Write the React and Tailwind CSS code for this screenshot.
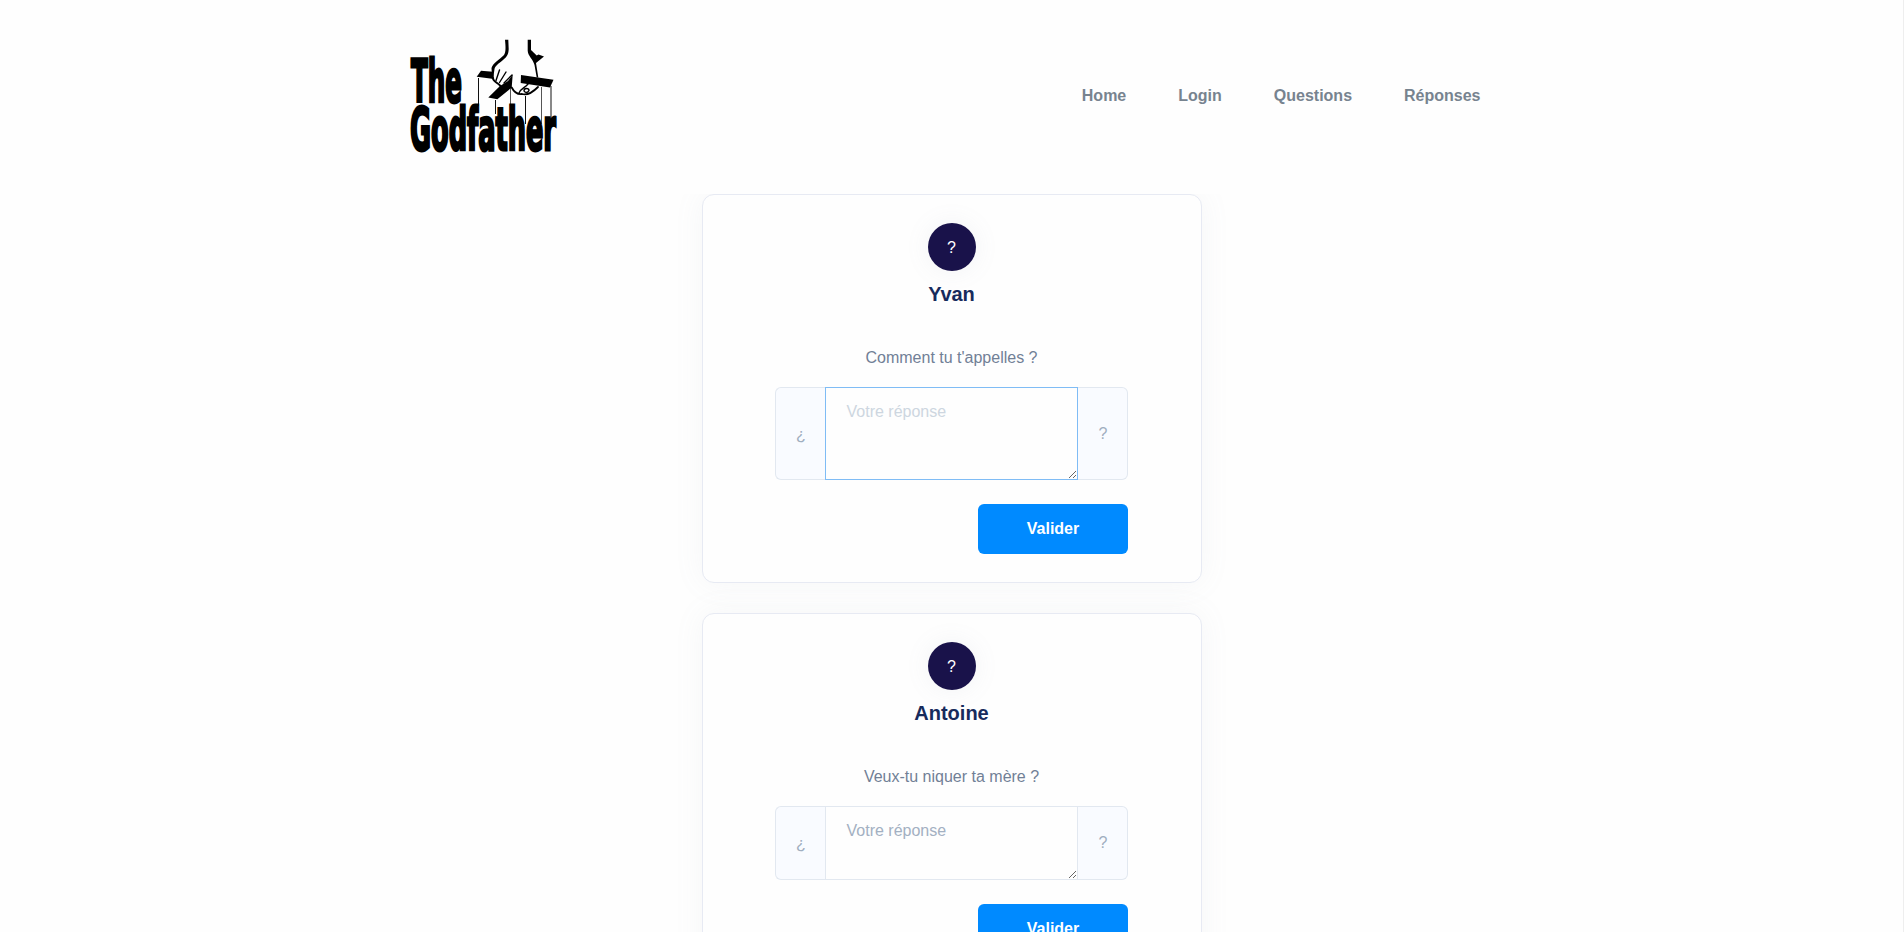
function Logo() {
  return (
    <svg className="h-[130px] w-[170px] overflow-visible" viewBox="0 0 170 130" role="img" aria-label="The Godfather">
      <g fill="none" stroke="#111" strokeWidth="1">
        <path d="M78.500 48V76M95.500 70V84M125.500 66V94" />
        <path d="M110.500 58V82M141.500 57V94" stroke="#555" />
        <path d="M151 56V96" stroke="#888" strokeWidth="2" />
      </g>
      <g fill="#000">
        <path d="M105 9.700H108.300L108.700 19C108.500 24 107 27 103 30C98 34 95 36 94.500 39L93.500 46H92L91.500 38C93 33 99 30 104 25C106 22 105.700 17 105 9.700Z" />
        <path d="M127.700 9.700H131V20L136.700 25.500L138.500 24.500L144 26.500L136 33L138.300 47.500H136.700L134.500 35C133 29 128 26 127.700 20.700Z" />
        <path d="M81 40.700L93 41.700L94 49L76.700 46.700Z" />
        <path d="M121 45L153.500 49.700L150 57.500L120.700 53Z" />
        <path d="M88.300 67.500L100 56L108 51L112.700 44.500L111.700 57.500L97.300 69.300Z" />
      </g>
      <g fill="none" stroke="#000" strokeLinecap="round" strokeWidth="1.400">
        <path d="M92.500 47C93 52 97 52 100.500 56" strokeWidth="2" />
        <path d="M99.500 40L96 50.500M106 42L99.500 52.500M112 45L104 53" />
        <path d="M111.700 57.500C114 62 118 64.500 122 64C128 66 133 62 138 57" strokeWidth="1.800" />
        <path d="M119 63C121 58 125 58 128 54M124 61C124 57.500 129 58 129 60.500C128 63 125 63 124 61" />
      </g>
      <g fill="#000" stroke="#000" strokeWidth="1.300" fontFamily="DejaVu Sans Condensed, DejaVu Sans, sans-serif" fontStretch="condensed" fontWeight="700">
        <text transform="translate(11 72) scale(1 2.250)" fontSize="26" textLength="51" lengthAdjust="spacingAndGlyphs">The</text>
        <text transform="translate(10 119.500) scale(1 2.250)" fontSize="26" textLength="146" lengthAdjust="spacingAndGlyphs">Godfather</text>
      </g>
    </svg>
  );
}

function QuestionCard({ name, question, focused }) {
  return (
    <section className="h-[389px] w-[500px] rounded-xl border border-[#e7eaf3] bg-[#fefefe] px-[72px] pt-7 shadow-[0_0_30px_rgba(140,152,164,0.08)]">
      <div className="flex flex-col items-center">
        <div className="flex h-12 w-12 items-center justify-center rounded-full bg-[#19124a] pt-px text-white shadow-[0_0_24px_rgba(140,152,164,0.1)]">?</div>
        <h2 className="mt-2 text-xl leading-[30px] font-bold text-[#172b5c]">{name}</h2>
        <p className="mt-[37px] leading-6 text-[#718096]">{question}</p>
      </div>
      <div className={focused ? "mt-[17px] flex h-[93px]" : "mt-[17px] flex h-[74px]"}>
        <span className="flex w-[50px] items-center justify-center rounded-l-md border border-r-0 border-[#e2e8f0] bg-[#f9fbff] pt-0.5 pl-0.5 text-[#a0aec0]">¿</span>
        <textarea
          placeholder="Votre réponse"
          className={
            focused
              ? "block h-full w-[253px] resize border border-[#7fbcf5] bg-[#fefefe] py-3 pr-5 pl-[21px] leading-6 outline-none placeholder:text-[#cdd6e0]"
              : "block h-full w-[253px] resize border border-[#e2e8f0] bg-[#fefefe] py-3 pr-5 pl-[21px] leading-6 outline-none placeholder:text-[#a3b0c2]"
          }
        />
        <span className="flex w-[50px] items-center justify-center rounded-r-md border border-l-0 border-[#e2e8f0] bg-[#f9fbff] pl-0.5 text-[#a0aec0]">?</span>
      </div>
      <div className="mt-6 flex justify-end pr-px">
        <button className="h-[50px] w-[150px] rounded-md bg-[#008aff] pb-px pl-px font-bold text-white">Valider</button>
      </div>
    </section>
  );
}

export default function App() {
  return (
    <div className="h-screen overflow-hidden border-r border-[#eeeeee] bg-[#fefefe] font-['Liberation_Sans',Arial,sans-serif] text-base">
      <header className="relative h-[194px] bg-[#fefefe] pt-[30px]">
        <div className="mx-auto flex w-[1104px] justify-between">
          <Logo />
          <nav className="mt-[54px] flex h-6 gap-[52px] pr-[23px] leading-6 font-bold text-[#77838f]">
            <a>Home</a><a>Login</a><a>Questions</a><a>Réponses</a>
          </nav>
        </div>
      </header>
      <main className="flex flex-col items-center gap-[30px]">
        <QuestionCard name="Yvan" question="Comment tu t'appelles ?" focused />
        <QuestionCard name="Antoine" question="Veux-tu niquer ta mère ?" />
      </main>
    </div>
  );
}
